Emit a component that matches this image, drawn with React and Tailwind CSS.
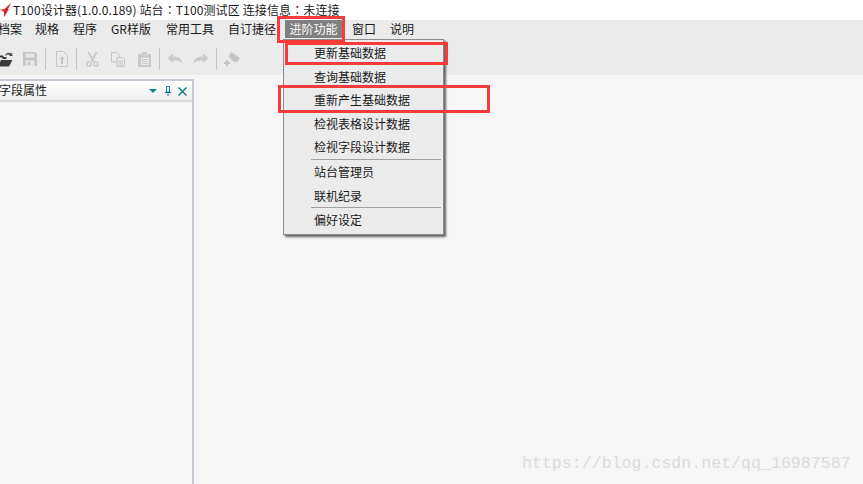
import React from "react";

const cjk = { fontFamily: '"Noto Sans CJK SC", "Noto Sans", sans-serif' };

const menus = [
  { label: "档案", w: "w-[37px]" },
  { label: "规格", w: "w-[38px]" },
  { label: "程序", w: "w-[38px]" },
  { label: "GR样版", w: "w-[55px]" },
  { label: "常用工具", w: "w-[62px]" },
  { label: "自订捷径", w: "w-[57px]" },
];

const dropdown = [
  ["更新基础数据", "查询基础数据", "重新产生基础数据", "检视表格设计数据", "检视字段设计数据"],
  ["站台管理员", "联机纪录"],
  ["偏好设定"],
];

const Sep = () => <div className="w-px h-[22px] bg-[#c4c4c4]" />;

// toolbar icons, drawn by hand as they are all disabled grey apart from the folder
const FolderIcon = () => (
  <svg width="16" height="15" viewBox="0 0 16 15" className="ml-[-3px]">
    <path d="M1.500 13V4.500h4l1 1.500h3" fill="none" stroke="#3c3c3c" strokeWidth="2" />
    <path d="M1 14l3-6h11.500l-3.500 6.500H1z" fill="#3c3c3c" />
    <path d="M8 4c1-3 3.500-4 6-2.500l1-1 .5 3.500-3.500 0 1-1C11.500 2 9.500 2.500 8 4z" fill="#4a4a4a" />
  </svg>
);
const SaveIcon = () => (
  <svg width="14" height="14" viewBox="0 0 14 14">
    <path d="M0 0h12l2 2v12H0z" fill="#c6c6c6" />
    <path d="M2.500 1.500h9v4h-9z" fill="#e6e6e6" />
    <path d="M2.500 8.500h9V14h-9z" fill="#e6e6e6" />
    <path d="M4.500 10h3v3h-3z" fill="#c6c6c6" />
  </svg>
);
const UploadDocIcon = () => (
  <svg width="12" height="16" viewBox="0 0 12 16">
    <path d="M.5.500h7l4 4v11H.5z" fill="none" stroke="#c6c6c6" />
    <path d="M6 5l3 3.500H7V13H5V8.500H3z" fill="#c6c6c6" />
  </svg>
);
const ScissorsIcon = () => (
  <svg width="13" height="15" viewBox="0 0 13 15" fill="none" stroke="#cbcbcb">
    <path d="M2.500 0l5 9.500M10.500 0l-5 9.500" strokeWidth="2" />
    <circle cx="3" cy="12" r="2.200" strokeWidth="1.500" />
    <circle cx="10" cy="12" r="2.200" strokeWidth="1.500" />
  </svg>
);
const CopyIcon = () => (
  <svg width="14" height="15" viewBox="0 0 14 15">
    <path d="M.5.500h5.500l2 2v7.500H.5z" fill="#ebebeb" stroke="#c4c4c4" />
    <path d="M6 5.500h5.500l2 2v7H6z" fill="#ebebeb" stroke="#c4c4c4" />
    <path d="M7.500 9h4.500M7.500 11h4.500M7.500 13h4.500" stroke="#c4c4c4" />
  </svg>
);
const PasteIcon = () => (
  <svg width="13" height="15" viewBox="0 0 13 15">
    <path d="M0 2h13v13H0z" fill="#c8c8c8" />
    <path d="M3.500 0h6v3h-6z" fill="#c8c8c8" stroke="#ebebeb" strokeWidth=".5" />
    <path d="M3 5.500h8V13H3z" fill="#ebebeb" />
    <path d="M4 7.500h6M4 9.500h6M4 11.500h6" stroke="#c8c8c8" />
  </svg>
);
const UndoIcon = ({ flip }) => (
  <svg width="16" height="10" viewBox="0 0 16 10" className={flip ? "-scale-x-100" : ""}>
    <path d="M0 4L6 0v2.500c5 0 9 2 10 7.500-2-3-5-3.500-10-3.500V8.500z" fill="#cacaca" />
  </svg>
);
const StampIcon = () => (
  <svg width="16" height="14" viewBox="0 0 16 14">
    <path d="M7 0l9 6-2.500 4-4-.5L4.500 5z" fill="#c4c4c4" />
    <path d="M2 8h2v2h2v2H4v2H2v-2H0v-2h2z" fill="#c4c4c4" />
  </svg>
);

const PanelButtons = () => (
  <div className="flex items-center mr-[5px] mt-[1px]">
    <svg width="8" height="4" viewBox="0 0 8 4"><path d="M0 0h8L4 4z" fill="#0f7f8f" /></svg>
    <svg width="6" height="10" viewBox="0 0 6 10" fill="none" stroke="#0f7f8f" className="ml-[8px]">
      <path d="M1.500.500h3V6h-3z" />
      <path d="M0 6.500h6M3 7v3" />
    </svg>
    <svg width="9" height="9" viewBox="0 0 9 9" fill="none" stroke="#0f7f8f" strokeWidth="1.500" className="ml-[7px]">
      <path d="M.5.500l8 8M8.500.500l-8 8" />
    </svg>
  </div>
);

export default function App() {
  return (
    <div
      className="relative w-[863px] h-[484px] overflow-hidden bg-[#f6f6f6] flex flex-col text-xs text-[#1a1a1a]"
      style={cjk}
    >
      {/* title bar */}
      <div className="h-5 bg-white flex items-center shrink-0">
        <svg width="11" height="14" viewBox="0 0 11 14" className="mr-[2px]">
          <path d="M0 6l4 .5L11 0 8 6h1l-5 8V9z" fill="#e0202a" />
        </svg>
        <span
          className="text-[12px] leading-5 whitespace-nowrap tracking-[0.13px]"
          style={{ fontFamily: '"Noto Sans CJK TC", "Noto Sans", sans-serif' }}
        >
          T100设计器(1.0.0.189) 站台：T100测试区 连接信息：未连接
        </span>
      </div>

      {/* menu bar */}
      <div className="h-[18px] bg-[#ebebeb] flex items-center shrink-0 ml-[-2px]">
        {menus.map((m) => (
          <div key={m.label} className={`${m.w} leading-[18px] whitespace-nowrap`}>{m.label}</div>
        ))}
        <div className="w-[57px] h-[18px] bg-[#808080] text-white text-center leading-[18px]">进阶功能</div>
        <div className="ml-[10px] w-[38px] leading-[18px]">窗口</div>
        <div className="leading-[18px]">说明</div>
      </div>

      {/* toolbar */}
      <div className="h-[37px] bg-[#ebebeb] flex items-center shrink-0 pt-[5px]">
        <FolderIcon />
        <div className="ml-[10px]"><SaveIcon /></div>
        <div className="ml-[8px]"><Sep /></div>
        <div className="ml-[10px]"><UploadDocIcon /></div>
        <div className="ml-[8px]"><Sep /></div>
        <div className="ml-[9px]"><ScissorsIcon /></div>
        <div className="ml-[12px]"><CopyIcon /></div>
        <div className="ml-[13px]"><PasteIcon /></div>
        <div className="ml-[8px]"><Sep /></div>
        <div className="ml-[7px]"><UndoIcon /></div>
        <div className="ml-[10px]"><UndoIcon flip /></div>
        <div className="ml-[7px]"><Sep /></div>
        <div className="ml-[7px]"><StampIcon /></div>
      </div>

      {/* workspace */}
      <div className="flex-1 flex pt-[4px]">
        <div className="w-[194px] border-r-2 border-[#c9c9d6] flex flex-col">
          <div className="h-[23px] border-t-2 border-t-[#c9c9d6] border-b-2 border-b-[#dcdcdc] flex items-center justify-between bg-gradient-to-b from-white to-[#efefef]">
            <span className="text-[12px] ml-[-1px] mb-[1px]">字段属性</span>
            <PanelButtons />
          </div>
        </div>
      </div>

      {/* open dropdown */}
      <div className="absolute left-[283px] top-[39px] w-[161px] h-[196px] bg-[#ebebeb] border border-[#8c8c8c] pt-[1px] px-[1px] shadow-[2px_2px_2px_rgba(0,0,0,0.6)]">
        {dropdown.map((group, i) => (
          <div key={i} className={i > 0 ? "border-t border-[#a0a0a0] ml-[26px] mr-[1px]" : "ml-[26px] mr-[1px]"}>
            {group.map((item) => (
              <div key={item} className="h-[23.6px] leading-[23px] pl-[3px] whitespace-nowrap">{item}</div>
            ))}
          </div>
        ))}
      </div>

      {/* red annotation boxes */}
      <div className="absolute left-[277px] top-[16px] w-[68px] h-[27px] border-[3px] border-[#f73b3b]" />
      <div className="absolute left-[285px] top-[42px] w-[163px] h-[23px] border-[3px] border-[#f73b3b]" />
      <div className="absolute left-[278px] top-[85px] w-[212px] h-[28px] border-[3px] border-[#f73b3b]" />

      {/* watermark */}
      <div
        className="absolute left-[522px] top-[454px] text-[16.600px] leading-5 text-[#dcdcd8] whitespace-nowrap"
        style={{ fontFamily: '"Liberation Mono", monospace' }}
      >
        https://blog.csdn.net/qq_16987587
      </div>
    </div>
  );
}
